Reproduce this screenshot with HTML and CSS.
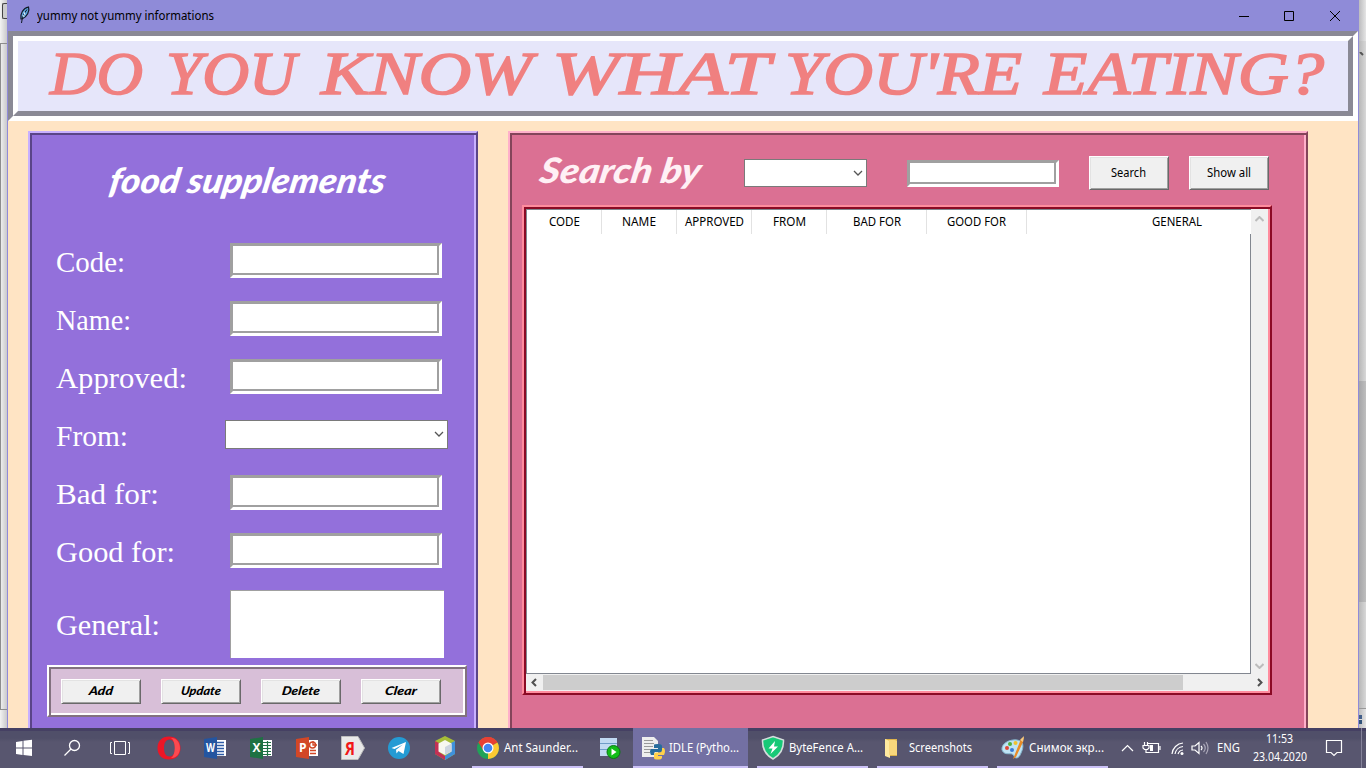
FILE: index.html
```html
<!DOCTYPE html>
<html lang="en">
<head>
<meta charset="utf-8">
<title>yummy not yummy informations</title>
<link rel="stylesheet" href="styles.css">
</head>
<body>
<div class="desktop">
  <div class="edge-left"><div class="edge-box"></div><div class="edge-pane"></div></div>
  <main class="window">
    <header class="titlebar">
      <svg class="feather" width="12" height="18" viewBox="0 0 12 18"><path d="M2 13C1 8 4 2 9.500 1C11 5 8 11 3 13Z" fill="#5da5dd" stroke="#101824" stroke-width="1.200"/><path d="M2.500 17C3 12 5 7 8 3.500" fill="none" stroke="#101824"/><path d="M5 6L6 9M4 9L5 11" stroke="#e4f6ff"/></svg>
      <svg class="ui caption" width="200" height="20"><text x="0" y="14" textLength="177" lengthAdjust="spacingAndGlyphs">yummy not yummy informations</text></svg>
      <svg width="112" height="30" viewBox="0 0 112 30" fill="none" stroke="#000"><path d="M0 15.500H10M45.500 10.500H54.500V19.500H45.500ZM91 10L101 20M101 10L91 20"/></svg>
    </header>
    <section class="banner">
      <svg class="banner-text" width="1330" height="70"><text x="32" y="53" textLength="93" lengthAdjust="spacingAndGlyphs">DO</text><text x="148" y="53" textLength="130" lengthAdjust="spacingAndGlyphs">YOU</text><text x="303" y="53" textLength="211" lengthAdjust="spacingAndGlyphs">KNOW</text><text x="534" y="53" textLength="218" lengthAdjust="spacingAndGlyphs">WHAT</text><text x="767" y="53" textLength="237" lengthAdjust="spacingAndGlyphs">YOU'RE</text><text x="1026" y="53" textLength="280" lengthAdjust="spacingAndGlyphs">EATING?</text></svg>
    </section>
    <div class="panels">
      <section class="panel form">
        <svg class="script white" width="300" height="58"><text x="9" y="40" textLength="276" lengthAdjust="spacingAndGlyphs">food supplements</text></svg>
        <div class="rows">
          <div class="row"><svg class="label" width="175" height="40"><text x="1" y="31" textLength="69" lengthAdjust="spacingAndGlyphs">Code:</text></svg><div class="entry"></div></div>
          <div class="row"><svg class="label" width="175" height="40"><text x="1" y="31" textLength="75" lengthAdjust="spacingAndGlyphs">Name:</text></svg><div class="entry"></div></div>
          <div class="row"><svg class="label" width="175" height="40"><text x="1" y="31" textLength="131" lengthAdjust="spacingAndGlyphs">Approved:</text></svg><div class="entry"></div></div>
          <div class="row"><svg class="label" width="170" height="40"><text x="1" y="31" textLength="72" lengthAdjust="spacingAndGlyphs">From:</text></svg><div class="combo"><svg width="10" height="6"><path d="M1 1L5 5L9 1" fill="none" stroke="#555" stroke-width="1.300"/></svg></div></div>
          <div class="row"><svg class="label" width="175" height="40"><text x="1" y="31" textLength="103" lengthAdjust="spacingAndGlyphs">Bad for:</text></svg><div class="entry"></div></div>
          <div class="row"><svg class="label" width="175" height="40"><text x="1" y="31" textLength="119" lengthAdjust="spacingAndGlyphs">Good for:</text></svg><div class="entry"></div></div>
          <div class="row tall"><svg class="label" width="175" height="40"><text x="1" y="31" textLength="104" lengthAdjust="spacingAndGlyphs">General:</text></svg><div class="textarea"></div></div>
        </div>
        <div class="actions">
          <div class="btn"><svg class="hand" width="78" height="23"><text x="27" y="15" textLength="24" lengthAdjust="spacingAndGlyphs">Add</text></svg></div>
          <div class="btn"><svg class="hand" width="78" height="23"><text x="19" y="15" textLength="40" lengthAdjust="spacingAndGlyphs">Update</text></svg></div>
          <div class="btn"><svg class="hand" width="78" height="23"><text x="20" y="15" textLength="38" lengthAdjust="spacingAndGlyphs">Delete</text></svg></div>
          <div class="btn"><svg class="hand" width="78" height="23"><text x="23" y="15" textLength="32" lengthAdjust="spacingAndGlyphs">Clear</text></svg></div>
        </div>
      </section>
      <section class="panel results">
        <div class="search">
          <svg class="script blush" width="208" height="60"><text x="3" y="48" textLength="161" lengthAdjust="spacingAndGlyphs">Search by</text></svg>
          <div class="combo small"><svg width="10" height="6"><path d="M1 1L5 5L9 1" fill="none" stroke="#555" stroke-width="1.300"/></svg></div>
          <div class="entry small"></div>
          <div class="btn big"><svg class="ui" width="76" height="30"><text x="20" y="19" textLength="35" lengthAdjust="spacingAndGlyphs">Search</text></svg></div>
          <div class="btn big"><svg class="ui" width="76" height="30"><text x="16" y="19" textLength="44" lengthAdjust="spacingAndGlyphs">Show all</text></svg></div>
        </div>
        <div class="tree">
          <div class="grid">
            <svg class="ui heads" width="724" height="24"><path d="M74.500 0V24M149.500 0V24M224.500 0V24M299.500 0V24M399.500 0V24M499.500 0V24" stroke="#e2e2e2"/><text x="22" y="16" textLength="31" lengthAdjust="spacingAndGlyphs">CODE</text><text x="95" y="16" textLength="34" lengthAdjust="spacingAndGlyphs">NAME</text><text x="158" y="16" textLength="59" lengthAdjust="spacingAndGlyphs">APPROVED</text><text x="246" y="16" textLength="33" lengthAdjust="spacingAndGlyphs">FROM</text><text x="326" y="16" textLength="48" lengthAdjust="spacingAndGlyphs">BAD FOR</text><text x="420" y="16" textLength="59" lengthAdjust="spacingAndGlyphs">GOOD FOR</text><text x="625" y="16" textLength="50" lengthAdjust="spacingAndGlyphs">GENERAL</text></svg>
            <div class="cells"></div>
          </div>
          <div class="vscroll"><svg width="9" height="6"><path d="M.5 5L4.500 1L8.500 5" fill="none" stroke="#bcbcbc" stroke-width="2"/></svg><svg width="9" height="6"><path d="M.5 1L4.500 5L8.500 1" fill="none" stroke="#bcbcbc" stroke-width="2"/></svg></div>
          <div class="hscroll"><svg width="6" height="9"><path d="M5 1L1.500 4.500L5 8" fill="none" stroke="#505050" stroke-width="2"/></svg><div class="thumb"></div><svg width="6" height="9"><path d="M1 1L4.500 4.500L1 8" fill="none" stroke="#505050" stroke-width="2"/></svg></div>
        </div>
      </section>
    </div>
  </main>
  <div class="edge-right"><div class="edge-track"><svg width="7" height="4"><path d="M1 0L4 3" stroke="#555" stroke-width="2"/></svg><div class="edge-thumb"></div></div><div class="edge-status"></div></div>
</div>
<footer class="taskbar">
  <svg width="48" height="40" fill="#fff"><path d="M16 14L22.500 13V19.500H16ZM23.500 12.800L32 11.800V19.500H23.500ZM16 20.500H22.500V27L16 26ZM23.500 20.500H32V28L23.500 27Z"/></svg>
  <svg width="48" height="40" fill="none" stroke="#fff" stroke-width="1.300"><circle cx="26.500" cy="17.500" r="5"/><path d="M23 21L16.500 27.500"/></svg>
  <svg width="50" height="40" fill="none" stroke="#fff"><path d="M18.500 13.500H29.500V26.500H18.500ZM16 14.500H14.500V25.500H16M32 14.500H33.500V25.500H32"/></svg>
  <svg width="46" height="40"><path fill-rule="evenodd" d="M23 8.500C16 8.500 11.500 13 11.500 20S16 31.500 23 31.500S34.500 27 34.500 20S30 8.500 23 8.500ZM23.500 11.500C27 11.500 29 15 29 20S27 28.500 23.500 28.500S18 25 18 20S20 11.500 23.500 11.500Z" fill="#ed1626"/><path fill-rule="evenodd" d="M25 10C30 9.500 34 14 34 20S30 30.500 25 30C30 27 30 13 25 10Z" fill="#fb4a50"/></svg>
  <svg class="office" width="46" height="40"><path d="M24 12H34V28H24Z" fill="#fff"/><path d="M25 14.500H32M25 17.500H32M25 20.500H32M25 23.500H32M25 26.500H32" stroke="#2e5ca6" stroke-width="1.400"/><path d="M12 11L25 9V31L12 29Z" fill="#2455a0"/><text x="14" y="24" textLength="9" lengthAdjust="spacingAndGlyphs">W</text></svg>
  <svg class="office" width="46" height="40"><path d="M24 12H34V28H24Z" fill="#fff"/><path d="M25 14.500H33M25 17.500H33M25 20.500H33M25 23.500H33M25 26.500H33M29.500 13V28" stroke="#217346" stroke-width="1.200"/><path d="M12 11L25 9V31L12 29Z" fill="#1e7243"/><text x="14.500" y="24" textLength="8">X</text></svg>
  <svg class="office" width="46" height="40"><path d="M24 12H34V28H24Z" fill="#fff"/><circle cx="28.500" cy="17" r="3" fill="none" stroke="#d24726" stroke-width="1.500"/><path d="M29 13V17H33M26 22.500H32M26 25.500H32" stroke="#d24726" stroke-width="1.300" fill="none"/><path d="M12 11L25 9V31L12 29Z" fill="#d24726"/><text x="15" y="24" textLength="7">P</text></svg>
  <svg width="46" height="40"><path d="M11.500 8.500H28L34.500 20L28 31.500H11.500Z" fill="#e9e9e9" stroke="#bdbdbd"/><text class="ya" x="15" y="27" textLength="10" lengthAdjust="spacingAndGlyphs">Я</text></svg>
  <svg width="46" height="40"><circle cx="23" cy="20" r="11" fill="#249bd4"/><path d="M15.500 20L30 14L27.500 26L22.500 23L20.500 25.500L20 21.800L27 16.500L18.500 21Z" fill="#fff"/></svg>
  <svg width="50" height="40"><path d="M23 8L33 13V26L23 32L13 26V13Z" fill="#a6bd37"/><path d="M13 13L17 15V24L23 28V32L13 26Z" fill="#c33155"/><path d="M33 13L29 15V24L23 28V32L33 26Z" fill="#3f91dc"/><path d="M23 12L29.500 15.500V23.500L23 27L16.500 23.500V15.500Z" fill="#f7f8ef"/><path d="M23 19L29.500 15.500V23.500L23 27Z" fill="#cdd5df"/></svg>
  <div class="task"><svg class="ui light" width="111" height="40"><circle cx="16" cy="20" r="11" fill="#20a258"/><path d="M16 20L6.500 14.500A11 11 0 0 1 25.500 14.500Z" fill="#e64135"/><path d="M16 20L25.500 14.500A11 11 0 0 1 16 31Z" fill="#fdca32"/><path d="M16 14.500H25.500A11 11 0 0 0 6.500 14.500L11 22Z" fill="#e64135"/><circle cx="16" cy="20" r="5.500" fill="#fff"/><circle cx="16" cy="20" r="4.300" fill="#4285f4"/><text x="32" y="24" textLength="74" lengthAdjust="spacingAndGlyphs">Ant Saunder...</text></svg></div>
  <svg width="50" height="40"><path d="M17 10H34V28H17Z" fill="#c1daf2"/><path d="M17 15.500H34M17 21.500H34" stroke="#6f9dc7"/><circle cx="30.500" cy="24" r="6.500" fill="#12bd18" stroke="#087c11"/><path d="M28.500 20.500L33.500 24L28.500 27.500Z" fill="#fff"/></svg>
  <div class="task active"><svg class="ui light" width="115" height="40"><path d="M9 9H21L25 13V29H9Z" fill="#eee"/><path d="M11 12.500H20M11 15.500H21M11 18.500H20M11 21.500H18M11 24.500H17" stroke="#999"/><path d="M21 17Q21 16 25 16Q29 16 29 18V23Q29 24 27 24H22Q21 24 21 27H18Q16 23 18 21H25V20H21Z" fill="#286c9c"/><path d="M29 20H31Q33 23 31 27H25V28H29V30Q28 32 25 31.500Q21 32 21 30V26Q21 25 23 24.500H27Q29 24 29 22Z" fill="#ffd24a"/><text x="36" y="24" textLength="70" lengthAdjust="spacingAndGlyphs">IDLE (Pytho...</text></svg></div>
  <div class="task"><svg class="ui light" width="111" height="40"><path d="M16 8.500L26.500 12Q27 25 16 31Q5 25 5.500 12Z" fill="#17c977" stroke="#d4dddd" stroke-width="1.500"/><path d="M18 13L11.500 20.500H15.500L13.500 26L21 18.500H17Z" fill="#fff"/><text x="32" y="24" textLength="74" lengthAdjust="spacingAndGlyphs">ByteFence A...</text></svg></div>
  <div class="task"><svg class="ui light" width="111" height="40"><path d="M8 11H20V28H8Z" fill="#ddb34c"/><path d="M8 11L13 13V30L8 28Z" fill="#ffeaa0"/><path d="M12 12H18L20 13V27H12Z" fill="#f9d77c"/><text x="32" y="24" textLength="63" lengthAdjust="spacingAndGlyphs">Screenshots</text></svg></div>
  <div class="task"><svg class="ui light" width="111" height="40"><path d="M5 22C4 16 12 11 20 12C27 13 27 19 24 25C22 31 18 31 17 28C15 23 8 29 5 22Z" fill="#bfe4f5" stroke="#86b8cf"/><circle cx="10" cy="20" r="2" fill="#e04836"/><circle cx="13" cy="16" r="2" fill="#4fae3f"/><circle cx="18.500" cy="15" r="2" fill="#f0c22e"/><circle cx="15" cy="22" r="2" fill="#397ad5"/><path d="M16 31L24 11L27 9L26 14L19 29Z" fill="#e98c27"/><path d="M23 12L27 8L26 14Z" fill="#f5cc86"/><text x="32" y="24" textLength="75" lengthAdjust="spacingAndGlyphs">Снимок экр...</text></svg></div>
  <svg class="ui light tray" width="248" height="40"><g fill="none" stroke="#fff" stroke-width="1.200"><path d="M4 23L9.500 17.500L15 23M30 15.500H40.500V24.500H28V22M42 18V22M26.500 14V18M29.500 14V18M25 17.500H31V20L29.500 21.500H26.500L25 20Z"/><path d="M54 26A12 12 0 0 1 65 15M57 26A9 9 0 0 1 65 18.500M60 26A6 6 0 0 1 65 22"/><path d="M74 18H77L81 14.500V25.500L77 22H74Z"/><path d="M83 18Q85 20 83 22"/><path d="M85.500 16Q89 20 85.500 24M88 14Q92 20 88 26" stroke="#aaa7b8"/><path d="M208.500 12.500H223.500V24.500H219L216 27.500L213 24.500H208.500Z"/></g><path d="M32 17H35V23H32Z" fill="#fff"/><circle cx="64" cy="25.500" r="1.500" fill="#fff"/><path d="M243.500 0V40" stroke="#85839a"/><text x="99" y="24" textLength="23" lengthAdjust="spacingAndGlyphs">ENG</text><text x="148" y="15" textLength="27" lengthAdjust="spacingAndGlyphs">11:53</text><text x="135" y="33" textLength="54" lengthAdjust="spacingAndGlyphs">23.04.2020</text></svg>
</footer>
</body>
</html>
```
FILE: styles.css
```css
* { box-sizing: border-box; }
body { margin: 0; width: 1366px; height: 768px; overflow: hidden; font-family: "Noto Sans", sans-serif; }
svg { display: block; flex: none; }
.desktop { display: flex; height: 728px; background: #ddd; }
.edge-left { width: 7px; background: linear-gradient(90deg, #f3f3f3, #c9c9cb); padding-top: 3px; }
.edge-box { width: 7px; height: 16px; margin-left: 2px; border: 1px solid #444; border-right: 0; border-radius: 2px 0 0 2px; background: #ccc; }
.edge-pane { margin-top: 24px; height: 667px; border: 1px solid #8d8d8d; border-right: 0; }
.edge-left, .edge-right { overflow: hidden; }
.edge-right { width: 7px; background: linear-gradient(90deg, #bcbcbe, #e5e5e5); padding-top: 41px; }
.edge-track { height: 668px; padding-top: 11px; background: linear-gradient(90deg, #b8b8b8, #d8d8d8); border-bottom: 1px solid #999; }
.edge-thumb { margin-top: 325px; height: 221px; background: linear-gradient(90deg, #a5a5a7, #bebebe); }
.edge-status { width: 3px; height: 9px; margin-top: 6px; background: linear-gradient(#44608a 40%, #ddd 40% 60%, #31537a 60%); }
.window { width: 1352px; border: solid #908bd8; border-width: 0 1px; background: #ffe4c4; overflow: hidden; }
.titlebar { display: flex; align-items: center; height: 31px; background: #8f8bd8; padding: 0 7px 0 11px; }
.feather { margin-top: -1px; }
.caption { margin-left: 6px; margin-right: auto; }
.ui { font: 12px "Noto Sans", sans-serif; }
.ui text { fill: #000; }
.light text { fill: #fff; }
.banner { height: 90px; border: 5px solid; border-color: #8a8995 #fff #fff #8a8995; background: #e6e6fa; }
.banner-text { box-sizing: content-box; border: 5px solid; border-color: #fff #8a8995 #8a8995 #fff; font: italic 61px "Liberation Serif", serif; fill: #f08080; stroke: #f08080; stroke-width: 1.6px; }
.panels { display: flex; align-items: flex-start; gap: 30px; padding: 10px 0 0 20px; }
.panel { height: 620px; border: 2px solid; }
.form { width: 450px; background: #9370db; border-color: #c8b0ff #5a4488 #5a4488 #c8b0ff; box-shadow: inset 2px 2px #5a4488, inset -2px 0 #c8b0ff; padding: 20px 9px 0 17px; }
.results { width: 800px; background: #db7093; border-color: #ffb0ca #84445a #84445a #ffb0ca; box-shadow: inset 2px 2px #84445a, inset -2px 0 #ffb0ca; padding: 2px 12px 0; }
.script { font: italic 900 35px Lato, sans-serif; }
.script text { transform: skewX(-10deg); transform-origin: 0 44px; }
.form .script { margin-left: 51px; }
.white { fill: #fff; }
.blush { fill: #fff0f5; }
.rows { padding: 21px 0 0 8px; }
.row { display: flex; align-items: center; height: 58px; }
.row.tall { height: 84px; margin-top: 2px; }
.label { font: 29px "Liberation Serif", serif; fill: #fff; }
.entry { width: 212px; height: 35px; background: #fff; border: 3px solid; border-color: #a0a0a0 #fff #fff #a0a0a0; box-shadow: inset -2px -2px #a0a0a0; margin-top: -1px; }
.combo { display: flex; align-items: center; justify-content: flex-end; width: 223px; height: 29px; margin-top: -2px; padding-right: 3px; background: #fff; border: 1px solid #7a7a7a; }
.textarea { width: 214px; height: 68px; background: #fff; border: solid #a0a0a0; border-width: 1px 0 0 1px; }
.actions { display: flex; gap: 20px; width: 420px; height: 52px; margin-top: -1px; padding: 12px; background: #d8bfd8; border: 2px solid; border-color: #fff #82717f #82717f #fff; box-shadow: inset 2px 2px #82717f, inset -2px -2px #fff; }
.btn { width: 80px; height: 25px; background: #f0f0f0; border: 1px solid; border-color: #fff #696969 #696969 #fff; box-shadow: inset 1px 1px #e3e3e3, inset -1px -1px #a0a0a0; }
.hand { font: italic 900 12px Lato, sans-serif; }
.hand text { transform: skewX(-8deg); transform-origin: 0 11px; }
.search { display: flex; height: 70px; align-items: flex-start; padding: 0 0 0 14px; }
.combo.small { width: 123px; height: 28px; margin: 24px 40px 0 0; }
.entry.small { width: 152px; height: 27px; margin: 25px 30px 0 0; }
.btn.big { height: 34px; width: 80px; margin: 21px 20px 0 0; padding: 1px; flex: none; }
.btn.big:last-child { margin-right: 0; }
.tree { display: grid; grid-template: 465px 17px / 725px 17px; width: 750px; height: 490px; padding: 2px; border: 2px solid; border-color: #ff8c9e #8b0a25 #8b0a25 #ff8c9e; box-shadow: inset 2px 2px #8b0a25, inset -2px -2px #ff8c9e; }
.grid { background: #fff; border-left: 1px solid #828790; border-top: 1px solid #828790; }
.cells { height: 440px; border: solid #828790; border-width: 0 1px 1px 0; }
.vscroll { background: #f0f0f0; display: flex; flex-direction: column; justify-content: space-between; align-items: center; padding: 7px 0 5px; }
.hscroll { grid-column: 1 / 3; background: #f0f0f0; display: flex; align-items: center; padding: 0 5px; }
.thumb { width: 640px; height: 15px; margin: 0 auto 0 6px; background: #cdcdcd; }
.taskbar { display: flex; height: 40px; background: linear-gradient(#454063 0 3px, #504f69 3px 10px, #58566f 14px); }
.task { width: 111px; margin-right: 9px; box-shadow: inset 0 -2px #cbc1f6; flex: none; }
.task:has(+ svg) { margin-right: 0; }
.task.active { width: 115px; background: #7370a3; }
.task:has(+ .tray) { margin-right: 10px; }
.office text { font: bold 12px "Open Sans", sans-serif; fill: #fff; }
.ya { font: bold 18px "Open Sans", sans-serif; fill: #f21717; }
```
